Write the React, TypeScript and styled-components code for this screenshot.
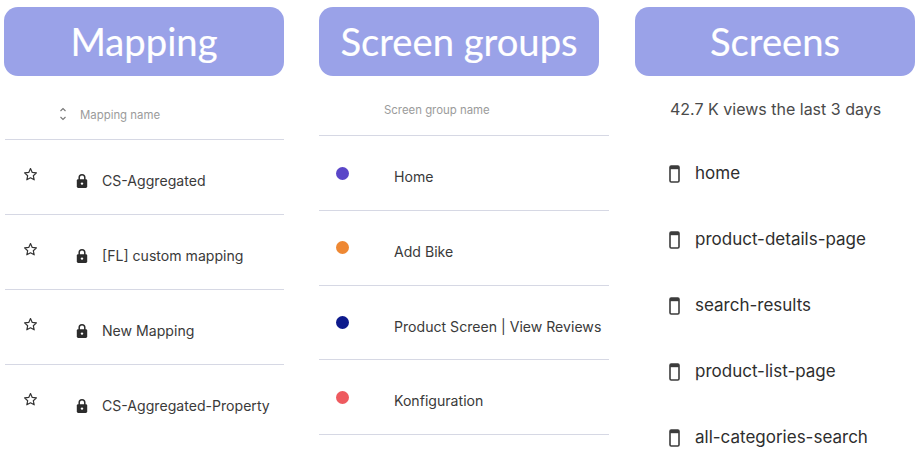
import React from "react";
import styled, { createGlobalStyle } from "styled-components";

const Global = createGlobalStyle`
  html, body { margin: 0; padding: 0; background: #fff; }
  body { font-family: "Inter", "Open Sans", sans-serif; width: 920px; height: 452px; overflow: hidden; }
`;

const Page = styled.div`
  display: flex;
  align-items: flex-start;
  width: 920px;
  height: 452px;
  padding: 7px 0 0 4px;
  box-sizing: border-box;
  overflow: hidden;
`;

const Column = styled.section<{ $width: number; $gap: number }>`
  width: ${(p) => p.$width}px;
  margin-right: ${(p) => p.$gap}px;
  flex: none;
`;

const Title = styled.h1`
  width: 280px;
  height: 69px;
  margin: 0;
  display: flex;
  align-items: center;
  justify-content: center;
  padding-bottom: 1px;
  box-sizing: border-box;
  background: #9aa2e8;
  border-radius: 14px;
  color: #fff;
  font: 400 38.2px/1 "Lato", sans-serif;
  -webkit-text-stroke: 0.15px #fff;
`;

const TableHead = styled.div<{ $height: number; $indent: number; $inset: number }>`
  height: ${(p) => p.$height}px;
  margin-left: ${(p) => p.$inset}px;
  padding-left: ${(p) => p.$indent}px;
  display: flex;
  align-items: center;
  box-sizing: border-box;
  border-bottom: 1px solid #d6d8e4;
`;

const HeadLabel = styled.span<{ $shift: number }>`
  font-size: 11.4px;
  color: #9b9b9b;
  margin-top: ${(p) => p.$shift}px;
  white-space: nowrap;
`;

const SortIcon = styled.svg`
  width: 10px;
  height: 16px;
  margin: 13px 12px 0 0;
  flex: none;
`;

const Row = styled.div<{ $last?: boolean; $inset: number; $height: number }>`
  height: ${(p) => p.$height}px;
  box-sizing: border-box;
  display: flex;
  align-items: flex-start;
  margin-left: ${(p) => p.$inset}px;
  border-bottom: ${(p) => (p.$last ? "none" : "1px solid #d6d8e4")};
`;

const StarIcon = styled.svg`
  width: 15px;
  height: 15px;
  margin: 27px 0 0 18px;
  flex: none;
`;

const LockIcon = styled.svg`
  width: 14px;
  height: 16px;
  margin: 33px 0 0 37px;
  flex: none;
`;

const RowText = styled.span<{ $top: number; $left: number }>`
  font-size: 14.1px;
  line-height: 20px;
  color: #3a3a3a;
  white-space: nowrap;
  margin: ${(p) => p.$top}px 0 0 ${(p) => p.$left}px;
`;

const Dot = styled.span<{ $color: string }>`
  width: 13px;
  height: 13px;
  border-radius: 50%;
  background: ${(p) => p.$color};
  margin: 30.5px 0 0 17px;
  flex: none;
`;

const Views = styled.div`
  height: 64px;
  padding: 22px 0 0 35px;
  box-sizing: border-box;
  font-size: 16px;
  line-height: 22px;
  color: #4a4a4a;
  white-space: nowrap;
`;

const ScreenRow = styled.div`
  height: 66px;
  display: flex;
  align-items: center;
  padding-left: 34px;
  box-sizing: border-box;
`;

const PhoneIcon = styled.svg`
  width: 11px;
  height: 18px;
  margin-top: 2px;
  flex: none;
`;

const ScreenName = styled.span`
  margin-left: 15px;
  font-size: 17px;
  line-height: 24px;
  color: #2e2e2e;
  white-space: nowrap;
`;

const mappings = ["CS-Aggregated", "[FL] custom mapping", "New Mapping", "CS-Aggregated-Property"];
const groups = [
  { name: "Home", color: "#5a46c8" },
  { name: "Add Bike", color: "#ee8833" },
  { name: "Product Screen | View Reviews", color: "#0d1a8c" },
  { name: "Konfiguration", color: "#ee5a5f" },
];
const screens = ["home", "product-details-page", "search-results", "product-list-page", "all-categories-search"];

const Star = () => (
  <StarIcon viewBox="0 0 24 24" fill="none" stroke="#333" strokeWidth="1.9" strokeLinejoin="round">
    <path d="M12 2.5l2.8 6.2 6.7.7-5 4.5 1.4 6.6L12 17.2l-5.9 3.3 1.4-6.6-5-4.5 6.7-.7z" />
  </StarIcon>
);

const Lock = () => (
  <LockIcon viewBox="0 0 14 16">
    <path fill="none" stroke="#2c2c2c" strokeWidth="1.5" d="M4.2 7V4.6a2.8 2.8 0 0 1 5.6 0V7" />
    <rect x="1.8" y="6.2" width="10.4" height="8.8" rx="1.4" fill="#2c2c2c" />
    <circle cx="7" cy="10.6" r="1.2" fill="#fff" />
  </LockIcon>
);

const Phone = () => (
  <PhoneIcon viewBox="0 0 11 18">
    <rect x="1" y="1" width="9" height="16" rx="1.2" fill="none" stroke="#3c3c3c" strokeWidth="1.6" />
    <rect x="1" y="1" width="9" height="3.2" fill="#3c3c3c" />
  </PhoneIcon>
);

export default function App() {
  return (
    <>
      <Global />
      <Page>
        <Column $width={280} $gap={35}>
          <Title>Mapping</Title>
          <TableHead $height={64} $indent={53} $inset={1}>
            <SortIcon viewBox="0 0 10 16" fill="none" stroke="#777" strokeWidth="1.1">
              <path d="M2.5 5L5 2.5 7.5 5M2.5 11L5 13.5 7.5 11" />
            </SortIcon>
            <HeadLabel $shift={14}>Mapping name</HeadLabel>
          </TableHead>
          {mappings.map((name, i) => (
            <Row key={name} $inset={1} $height={75} $last={i === mappings.length - 1}>
              <Star />
              <Lock />
              <RowText $top={31} $left={13}>{name}</RowText>
            </Row>
          ))}
        </Column>
        <Column $width={290} $gap={26}>
          <Title>Screen groups</Title>
          <TableHead $height={60} $indent={65} $inset={0}>
            <HeadLabel $shift={9}>Screen group name</HeadLabel>
          </TableHead>
          {groups.map((group) => (
            <Row key={group.name} $inset={0} $height={74.75}>
              <Dot $color={group.color} />
              <RowText $top={31} $left={45}>{group.name}</RowText>
            </Row>
          ))}
        </Column>
        <Column $width={280} $gap={0}>
          <Title>Screens</Title>
          <Views>42.7 K views the last 3 days</Views>
          {screens.map((name) => (
            <ScreenRow key={name}>
              <Phone />
              <ScreenName>{name}</ScreenName>
            </ScreenRow>
          ))}
        </Column>
      </Page>
    </>
  );
}
